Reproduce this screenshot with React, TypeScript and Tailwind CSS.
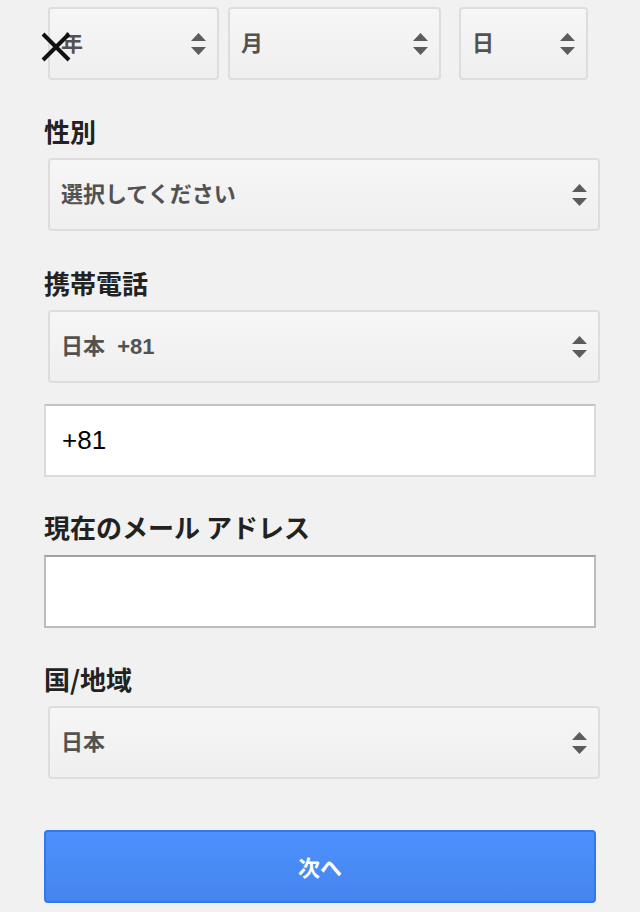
import React from 'react';

const cjk = { fontFamily: '"Noto Sans CJK JP", "Noto Sans", sans-serif' };
const latin = { fontFamily: '"Liberation Sans", "Noto Sans CJK JP", sans-serif' };

function Arrows() {
  return (
    <svg width="15" height="22" viewBox="0 0 15 22" className="shrink-0">
      <polygon points="0,8 7.5,0 15,8" fill="#5c5c5c" />
      <polygon points="0,14 15,14 7.5,22" fill="#5c5c5c" />
    </svg>
  );
}

function SelectBox({ children, className = '' }: { children: React.ReactNode; className?: string }) {
  return (
    <div
      className={`flex h-[73px] items-center justify-between rounded-[4px] border-2 border-[#dddddd] bg-gradient-to-b from-[#f6f6f6] to-[#efefef] pl-[11px] pr-[11px] text-[22px] font-semibold text-[#525252] ${className}`}
      style={latin}
    >
      <span className="whitespace-pre">{children}</span>
      <Arrows />
    </div>
  );
}

function Label({ children, className = '' }: { children: React.ReactNode; className?: string }) {
  return (
    <div className={`h-[36px] text-[26px] leading-[36px] font-bold text-[#222222] ${className}`} style={cjk}>
      {children}
    </div>
  );
}

export default function App() {
  return (
    <div className="relative min-h-[912px] w-[640px] bg-[#f1f1f1] pl-[44px]" style={cjk}>
      {/* close */}
      <svg
        className="absolute left-[40px] top-[31px]"
        width="32"
        height="32"
        viewBox="0 0 32 32"
      >
        <path d="M3 3 L29 29 M29 3 L3 29" stroke="#111111" strokeWidth="4" strokeLinecap="butt" />
      </svg>

      {/* birthday */}
      <div className="flex pt-[7px] pl-[4px]">
        <SelectBox className="w-[171px]">年</SelectBox>
        <SelectBox className="ml-[9px] w-[213px]">月</SelectBox>
        <SelectBox className="ml-[18px] w-[129px]">日</SelectBox>
      </div>

      <Label className="mt-[33px]">性別</Label>
      <SelectBox className="mt-[9px] ml-[4px] w-[552px]">選択してください</SelectBox>

      <Label className="mt-[34px]">携帯電話</Label>
      <SelectBox className="mt-[9px] ml-[4px] w-[552px]">日本  +81</SelectBox>
      <div
        className="mt-[21px] flex h-[73px] w-[552px] items-center border-2 border-[#dadada] border-t-[#c4c4c4] bg-white pl-[16px] text-[26px] text-black"
        style={latin}
      >
        +81
      </div>

      <Label className="mt-[32px]">現在のメール アドレス</Label>
      <div className="mt-[10px] h-[73px] w-[552px] border-2 border-[#bcbcbc] border-t-[#a3a3a3] bg-white" />

      <Label className="mt-[33px]">国/地域</Label>
      <SelectBox className="mt-[9px] ml-[4px] w-[552px]">日本</SelectBox>

      <button
        className="mt-[51px] flex h-[73px] w-[552px] items-center justify-center rounded-[4px] border-2 border-[#3079ed] bg-gradient-to-b from-[#4d90fe] to-[#4585ee] text-[22px] font-bold text-white"
        style={cjk}
      >
        次へ
      </button>
    </div>
  );
}
